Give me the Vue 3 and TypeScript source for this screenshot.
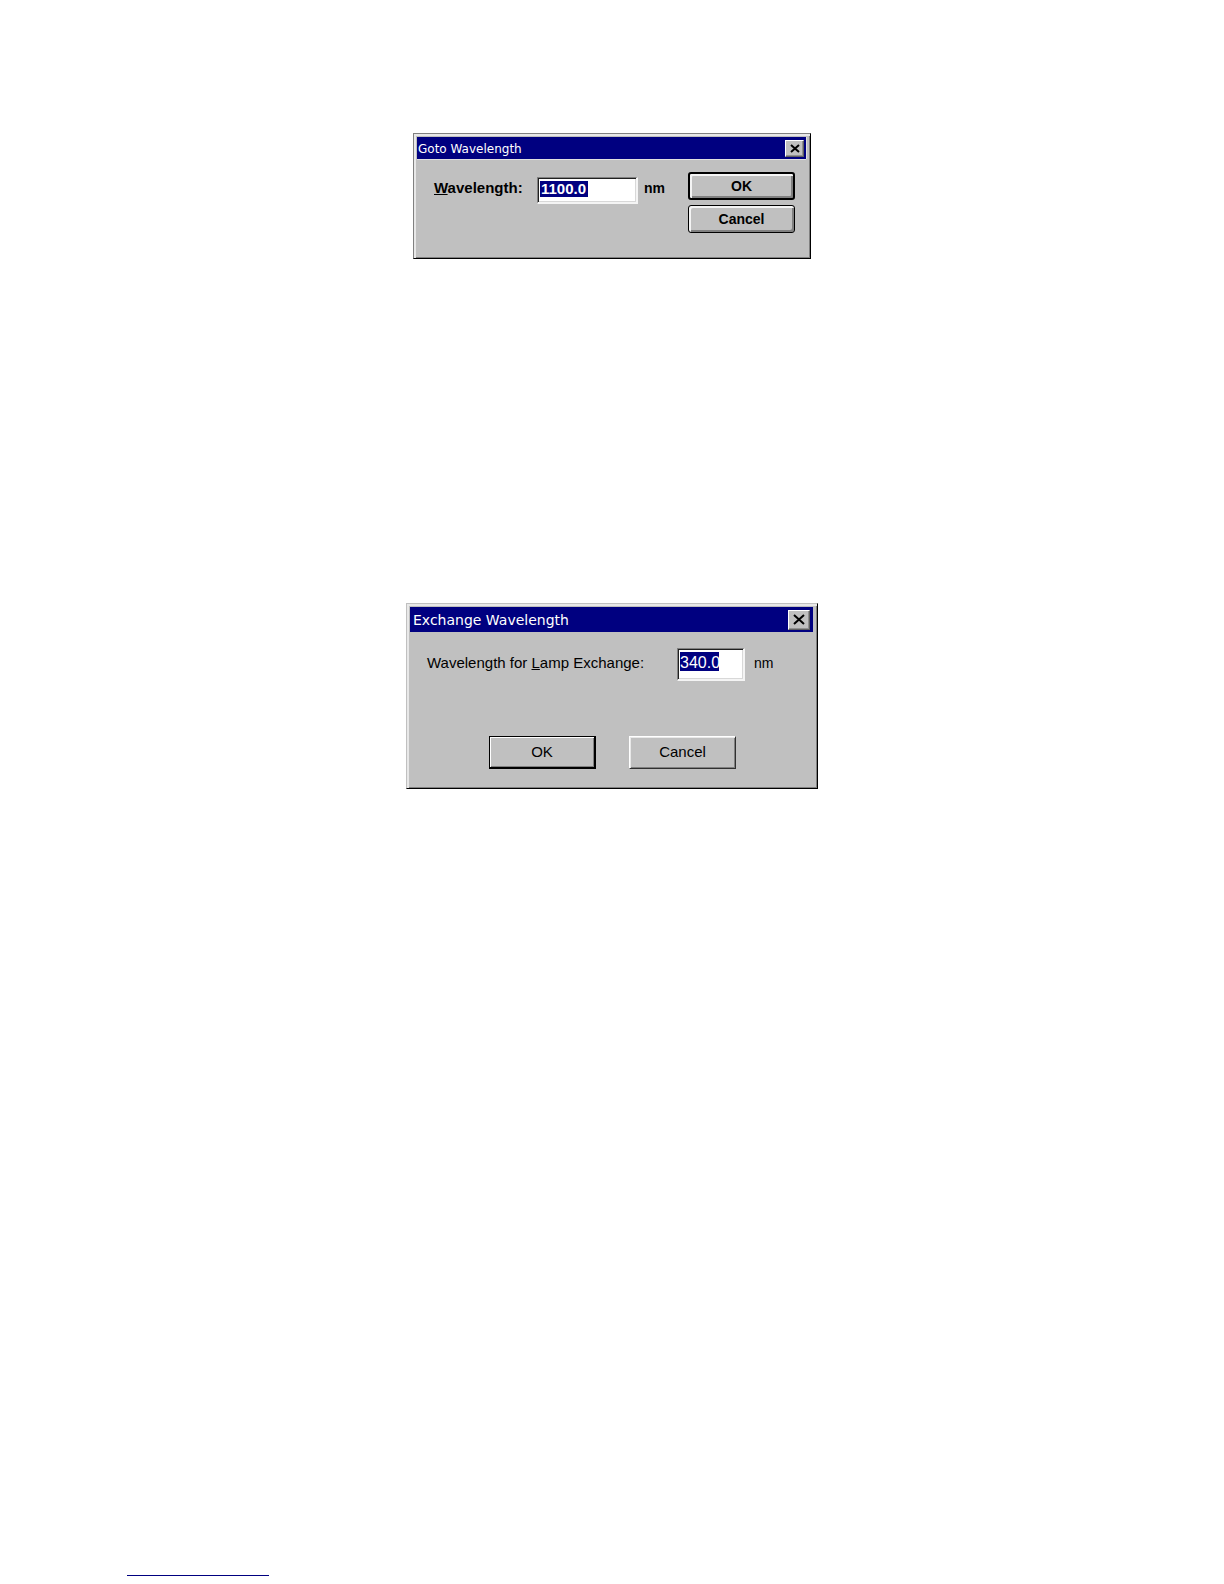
<script setup lang="ts">
import { ref } from 'vue'

const gotoWavelength = ref<string>('1100.0')
const lampWavelength = ref<string>('340.0')
</script>

<template>
  <main class="page">
    <section class="dialog goto" role="dialog" aria-labelledby="goto-title">
      <header class="titlebar">
        <h2 id="goto-title">Goto Wavelength</h2>
        <button class="close" type="button" aria-label="Close">
          <svg viewBox="0 0 10 9" width="10" height="9" aria-hidden="true">
            <path d="M1 1 L9 8 M9 1 L1 8" />
          </svg>
        </button>
      </header>
      <form class="body" @submit.prevent>
        <label for="goto-value"><u>W</u>avelength:</label>
        <input id="goto-value" v-model="gotoWavelength" type="text" />
        <span class="unit">nm</span>
        <div class="actions">
          <button class="push default" type="submit">OK</button>
          <button class="push" type="button">Cancel</button>
        </div>
      </form>
    </section>

    <section class="dialog exchange" role="dialog" aria-labelledby="exchange-title">
      <header class="titlebar">
        <h2 id="exchange-title">Exchange Wavelength</h2>
        <button class="close" type="button" aria-label="Close">
          <svg viewBox="0 0 12 11" width="12" height="11" aria-hidden="true">
            <path d="M1 1 L11 10 M11 1 L1 10" />
          </svg>
        </button>
      </header>
      <form class="body" @submit.prevent>
        <div class="field">
          <label for="lamp-value">Wavelength for <u>L</u>amp Exchange:</label>
          <input id="lamp-value" v-model="lampWavelength" type="text" />
          <span class="unit">nm</span>
        </div>
        <div class="actions">
          <button class="push default" type="submit">OK</button>
          <button class="push" type="button">Cancel</button>
        </div>
      </form>
    </section>

    <footer class="footer">
      <a class="rule-link" href="#" aria-label="Page link"></a>
    </footer>
  </main>
</template>

<style>
body {
  margin: 0;
  background: #fff;
}
</style>

<style scoped>
.page {
  box-sizing: border-box;
  min-height: 100vh;
  padding-top: 133px;
  display: flex;
  flex-direction: column;
  align-items: center;
  font-family: "Liberation Sans", Arial, sans-serif;
  color: #000;
}

.dialog {
  box-sizing: border-box;
  background: #c0c0c0;
  border: 1px solid;
  border-color: #808080 #000 #000 #808080;
  box-shadow: inset 2px 2px #e8e8e8, inset -1px -1px #808080;
  padding: 3px 4px 4px 3px;
}

.goto {
  width: 398px;
  min-height: 126px;
}

.exchange {
  width: 412px;
  min-height: 186px;
  margin-top: 344px;
  border-color: #c0c0c0 #000 #000 #c0c0c0;
}

.titlebar {
  display: flex;
  align-items: center;
  justify-content: space-between;
  height: 22px;
  padding: 0 2px 0 1px;
  background: #000080;
  color: #fff;
}

.goto .titlebar {
  box-shadow: 0 1px #e0e0e0, 1px 0 #e0e0e0;
}

.exchange .titlebar {
  height: 25px;
  padding: 0 3px;
}

h2 {
  margin: 0;
  padding-top: 1px;
  font-family: "DejaVu Sans", Verdana, sans-serif;
  font-size: 12px;
  font-weight: 400;
  line-height: 20px;
}

.exchange h2 {
  font-size: 14px;
}

button {
  box-sizing: border-box;
  margin: 0;
  padding: 0;
  background: #c0c0c0;
  color: #000;
  font-family: inherit;
  border-radius: 0;
}

.close {
  display: flex;
  align-items: center;
  justify-content: center;
  width: 19px;
  height: 17px;
  border: 1px solid;
  border-color: #fff #606060 #606060 #fff;
  box-shadow: inset -1px -1px #909090;
}

.close path {
  fill: none;
  stroke: #000;
  stroke-width: 2;
}

.exchange .close {
  width: 22px;
  height: 20px;
}

input {
  box-sizing: border-box;
  margin: 0;
  border: solid;
  border-width: 1px 2px 2px 1px;
  border-color: #808080 #f4f4f4 #f4f4f4 #808080;
  box-shadow: inset 1px 1px #202020, inset -1px -1px #d8d8d8;
  border-radius: 0;
  color: #fff;
  font-family: inherit;
  background-color: #fff;
  background-image: linear-gradient(#000080, #000080);
  background-repeat: no-repeat;
}

.goto .body {
  display: flex;
  align-items: flex-start;
  padding: 13px 11px 0 17px;
  font-size: 15px;
  font-weight: 700;
}

.goto label,
.goto .unit {
  line-height: 18px;
  padding-top: 7px;
}

.goto label {
  width: 103px;
}

.goto input {
  width: 101px;
  height: 27px;
  margin-top: 5px;
  padding: 2px 2px 6px 3px;
  font-size: 15px;
  font-weight: 700;
  line-height: 16px;
  background-size: 48px 16px;
  background-position: 2px 3px;
}

.goto .unit {
  margin-left: 6px;
  font-size: 14px;
}

.goto .actions {
  display: flex;
  flex-direction: column;
  gap: 5px;
  margin-left: auto;
}

.push {
  width: 107px;
}

.goto .push {
  height: 28px;
  border: 1px solid #000;
  border-radius: 3px;
  box-shadow: inset 2px 2px #f4f4f4, inset -2px -2px #808080;
  font-size: 14px;
  font-weight: 700;
}

.goto .default {
  border-width: 2px;
}

.exchange .body {
  padding: 16px 16px 0 17px;
  font-size: 15px;
}

.field {
  display: flex;
  align-items: flex-start;
}

.field label,
.field .unit {
  line-height: 18px;
  padding-top: 6px;
}

.field label {
  width: 250px;
}

.field input {
  width: 68px;
  height: 33px;
  padding: 4px 1px 7px 2px;
  font-size: 16px;
  line-height: 19px;
  background-size: 39px 19px;
  background-position: 2px 3px;
}

.field .unit {
  margin-left: 9px;
  font-size: 14px;
}

.exchange .actions {
  display: flex;
  gap: 33px;
  margin-top: 55px;
  padding-left: 62px;
}

.exchange .push {
  height: 33px;
  padding-bottom: 2px;
  border: 1px solid;
  border-color: #fff #303030 #303030 #fff;
  box-shadow: inset 1px 1px #e8e8e8, inset -1px -1px #808080;
  font-size: 15px;
}

.exchange .default {
  border-width: 1px 2px 2px 1px;
  border-color: #000;
  box-shadow: inset 1px 1px #fff, inset -1px -1px #808080;
}

.footer {
  box-sizing: border-box;
  width: 100%;
  margin-top: auto;
  padding: 0 127px 8px;
}

.rule-link {
  display: block;
  width: 142px;
  height: 16px;
  border-bottom: 1px solid #000080;
}
</style>
